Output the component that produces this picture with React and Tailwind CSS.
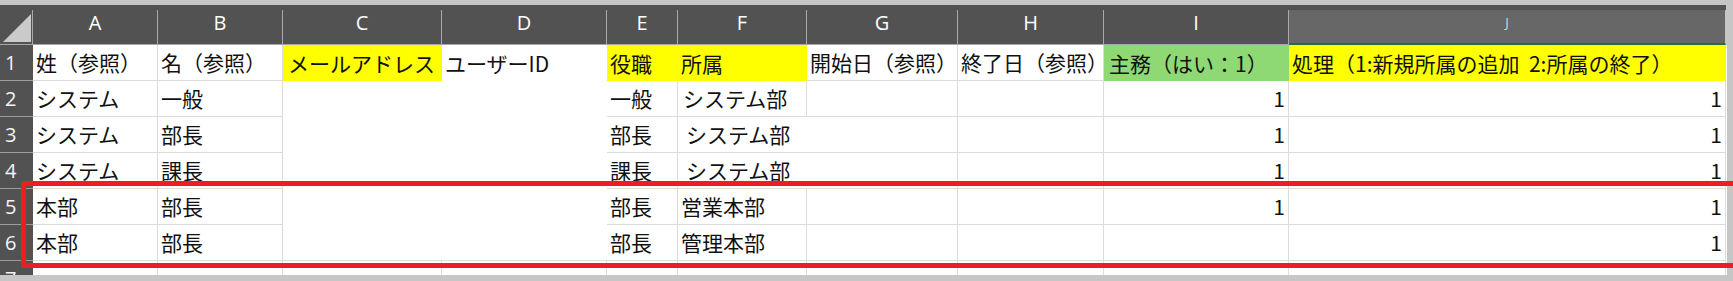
import clsx from 'clsx';

const COLS = [
  { l: 'A', w: 'w-[125px]' },
  { l: 'B', w: 'w-[125px]' },
  { l: 'C', w: 'w-[159px]' },
  { l: 'D', w: 'w-[165px]' },
  { l: 'E', w: 'w-[71px]' },
  { l: 'F', w: 'w-[129px]' },
  { l: 'G', w: 'w-[151px]' },
  { l: 'H', w: 'w-[146px]' },
  { l: 'I', w: 'w-[185px]' },
  { l: 'J', w: 'w-[437px]' },
];

const RB = 'border-r border-b';
const YEL = 'bg-[#ffff00]';
const NUM = 'border-r border-b justify-end pr-[3px]';

const ROWS = [
  [
    { t: '姓（参照）', c: RB },
    { t: '名（参照）', c: RB },
    { t: 'メールアドレス', c: `${YEL} pl-[5px]` },
    { t: 'ユーザーID', c: '' },
    { t: '役職', c: YEL },
    { t: '所属', c: YEL },
    { t: '開始日（参照）', c: RB },
    { t: '終了日（参照）', c: RB },
    { t: '主務（はい：1）', c: 'bg-[#8ed973] pl-[5px]' },
    { t: '処理（1:新規所属の追加  2:所属の終了）', c: `${YEL} border-r` },
  ],
  [
    { t: 'システム', c: RB },
    { t: '一般', c: RB },
    { t: '', c: '' },
    { t: '', c: '' },
    { t: '一般', c: RB },
    { t: 'システム部', c: `${RB} pl-[5px]` },
    { t: '', c: RB },
    { t: '', c: RB },
    { t: '1', c: NUM },
    { t: '1', c: NUM },
  ],
  [
    { t: 'システム', c: RB },
    { t: '部長', c: RB },
    { t: '', c: '' },
    { t: '', c: '' },
    { t: '部長', c: RB },
    { t: 'システム部', c: 'border-b pl-[8px]' },
    { t: '', c: RB },
    { t: '', c: RB },
    { t: '1', c: NUM },
    { t: '1', c: NUM },
  ],
  [
    { t: 'システム', c: RB },
    { t: '課長', c: RB },
    { t: '', c: '' },
    { t: '', c: '' },
    { t: '課長', c: RB },
    { t: 'システム部', c: 'border-b pl-[8px]' },
    { t: '', c: RB },
    { t: '', c: RB },
    { t: '1', c: NUM },
    { t: '1', c: NUM },
  ],
  [
    { t: '本部', c: RB },
    { t: '部長', c: RB },
    { t: '', c: '' },
    { t: '', c: '' },
    { t: '部長', c: RB },
    { t: '営業本部', c: RB },
    { t: '', c: RB },
    { t: '', c: RB },
    { t: '1', c: NUM },
    { t: '1', c: NUM },
  ],
  [
    { t: '本部', c: RB },
    { t: '部長', c: RB },
    { t: '', c: 'border-b' },
    { t: '', c: 'border-b' },
    { t: '部長', c: RB },
    { t: '管理本部', c: RB },
    { t: '', c: RB },
    { t: '', c: RB },
    { t: '', c: NUM },
    { t: '1', c: NUM },
  ],
  COLS.map(() => ({ t: '', c: RB })),
];

function Row({ n, cells }) {
  return (
    <div className="flex h-[36px] shrink-0">
      <div className="w-[33px] shrink-0 bg-[#525252] border-b border-[#9c9c9c] flex items-center pl-[5px] text-[20px] leading-none text-[#f4f4f4] font-['Open_Sans',sans-serif]">
        {n}
      </div>
      {cells.map((cell, i) => (
        <div
          key={i}
          className={clsx(
            'h-full shrink-0 flex items-center whitespace-pre pl-[3px] border-[#dcdcdc] text-[21px] leading-none text-[#111]',
            COLS[i].w,
            cell.c
          )}
        >
          {cell.t}
        </div>
      ))}
    </div>
  );
}

export default function App() {
  return (
    <div className="relative flex w-[1733px] h-[281px] overflow-hidden bg-[#c6c6c6] font-['Noto_Sans_CJK_JP','Noto_Sans',sans-serif]">
      <div className="flex flex-col w-[1726px] shrink-0">
        <div className="h-[5px] shrink-0" />

        {/* column header */}
        <div className="flex h-[40px] shrink-0 pt-[5px] bg-[#525252]">
          <div className="w-[33px] h-[35px] shrink-0 border-r border-b border-[#a8a8a8]">
            <svg width="32" height="34" viewBox="0 0 32 34">
              <polygon points="3,32 31,4 31,32" fill="#cacaca" />
            </svg>
          </div>
          {COLS.map(col => (
            <div
              key={col.l}
              className={clsx(
                "h-[35px] shrink-0 flex items-center justify-center pb-[8px] border-r leading-none font-['Open_Sans',sans-serif]",
                col.w,
                col.l === 'J'
                  ? 'bg-[#676767] border-[#c4c4c4] border-b-2 border-b-[#1e7145] text-[#dcdcdc] text-[13px]'
                  : 'border-[#a8a8a8] border-b text-white text-[20px]'
              )}
            >
              {col.l}
            </div>
          ))}
        </div>

        <div className="flex flex-col bg-white">
          {ROWS.slice(0, 6).map((cells, i) => (
            <Row key={i} n={i + 1} cells={cells} />
          ))}
          <div className="h-[14px] overflow-hidden flex flex-col">
            <Row n={7} cells={ROWS[6]} />
          </div>
        </div>

        <div className="h-[6px] shrink-0" />
      </div>

      {/* vertical scrollbar edge */}
      <div className="w-[7px] shrink-0 flex">
        <div className="w-[1px] mt-[45px] mb-[6px] bg-white" />
      </div>

      {/* red highlight */}
      <div className="absolute left-[21px] top-[181px] w-[1730px] h-[87px] border-[5px] border-[#ee1d25]" />
    </div>
  );
}
